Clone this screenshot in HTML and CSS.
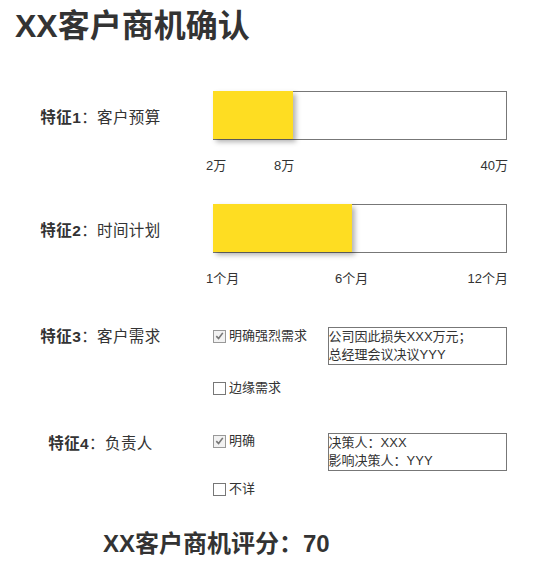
FILE: index.html
```html
<!DOCTYPE html>
<html lang="zh">
<head>
<meta charset="utf-8">
<title>XX客户商机确认</title>
<link rel="stylesheet" href="styles.css">
</head>
<body>
<div class="page">
  <h1 class="title">XX客户商机确认</h1>

  <section class="row row-1">
    <div class="label"><b>特征1</b>：客户预算</div>
    <div class="control">
      <div class="bar"><div class="fill" style="width:80px"></div></div>
      <div class="scale">
        <span style="left:-7px">2万</span>
        <span style="left:61px">8万</span>
        <span style="right:-1px">40万</span>
      </div>
    </div>
  </section>

  <section class="row row-2">
    <div class="label"><b>特征2</b>：时间计划</div>
    <div class="control">
      <div class="bar"><div class="fill" style="width:139px"></div></div>
      <div class="scale">
        <span style="left:-7px">1个月</span>
        <span style="left:122px">6个月</span>
        <span style="right:-1px">12个月</span>
      </div>
    </div>
  </section>

  <section class="row row-3">
    <div class="label"><b>特征3</b>：客户需求</div>
    <div class="control choice">
      <div class="options">
        <label class="option"><span class="box checked"><svg viewBox="0 0 12 12" width="12" height="12"><path d="M2.5 6.2 L5 8.8 L9.6 2.6" fill="none" stroke="#777" stroke-width="1.8"/></svg></span>明确强烈需求</label>
        <label class="option"><span class="box"></span>边缘需求</label>
      </div>
      <div class="note">公司因此损失XXX万元；<br>总经理会议决议YYY</div>
    </div>
  </section>

  <section class="row row-4">
    <div class="label"><b>特征4</b>：负责人</div>
    <div class="control choice">
      <div class="options">
        <label class="option"><span class="box checked"><svg viewBox="0 0 12 12" width="12" height="12"><path d="M2.5 6.2 L5 8.8 L9.6 2.6" fill="none" stroke="#777" stroke-width="1.8"/></svg></span>明确</label>
        <label class="option"><span class="box"></span>不详</label>
      </div>
      <div class="note">决策人：XXX<br>影响决策人：YYY</div>
    </div>
  </section>

  <div class="score">XX客户商机评分：70</div>
</div>
</body>
</html>
```

FILE: styles.css
```css
html, body {
  margin: 0;
  padding: 0;
  background: #fff;
}

.page {
  font-family: "Liberation Sans", "Noto Sans CJK SC", sans-serif;
  color: #333;
  width: 557px;
}

.title {
  margin: 6px 0 0 15px;
  font-size: 32px;
  line-height: 40px;
  font-weight: bold;
  color: #333;
}

.row {
  display: grid;
  grid-template-columns: 201px 294px;
  column-gap: 12px;
  align-items: start;
}

.row-1 { margin-top: 45px; }
.row-2 { margin-top: 29px; }
.row-3 { margin-top: 39px; }
.row-4 { margin-top: 35px; }

.label {
  text-align: center;
  font-size: 15.5px;
  letter-spacing: 0.4px;
  line-height: 20px;
  color: #333;
}

.row-1 .label, .row-2 .label { padding-top: 17px; }
.row-4 .label { padding-top: 2px; }

.bar {
  height: 47px;
  border: 1px solid #777;
}

.fill {
  height: 48px;
  margin: -1px 0 0 -1px;
  background: #fedd22;
  box-shadow: 3px 3px 5px rgba(0, 0, 0, 0.3);
}

.scale {
  position: relative;
  height: 18px;
  margin-top: 17px;
  font-size: 13px;
  line-height: 18px;
  color: #333;
}

.scale span {
  position: absolute;
  top: 0;
  white-space: nowrap;
}

.choice {
  display: flex;
  align-items: flex-start;
}

.options {
  width: 115px;
  display: flex;
  flex-direction: column;
}

.row-3 .options { row-gap: 34px; }
.row-4 .options { row-gap: 30px; }

.option {
  display: flex;
  align-items: center;
  font-size: 13px;
  line-height: 18px;
  color: #333;
  white-space: nowrap;
}

.box {
  width: 11px;
  height: 11px;
  border: 1px solid #777;
  background: #fff;
  margin-right: 3px;
  display: flex;
  align-items: center;
  justify-content: center;
  box-sizing: content-box;
}

.box.checked {
  border-color: #999;
  background: #f2f2f2;
}

.box svg {
  display: block;
}

.note {
  width: 178px;
  height: 36px;
  border: 1px solid #777;
  font-size: 13px;
  line-height: 18px;
  padding-left: 0;
  color: #333;
  white-space: nowrap;
}

.row-4 .note { margin-top: 1px; }

.score {
  margin: 31px 0 0 103px;
  font-size: 24px;
  line-height: 30px;
  font-weight: bold;
  color: #333;
}
```
